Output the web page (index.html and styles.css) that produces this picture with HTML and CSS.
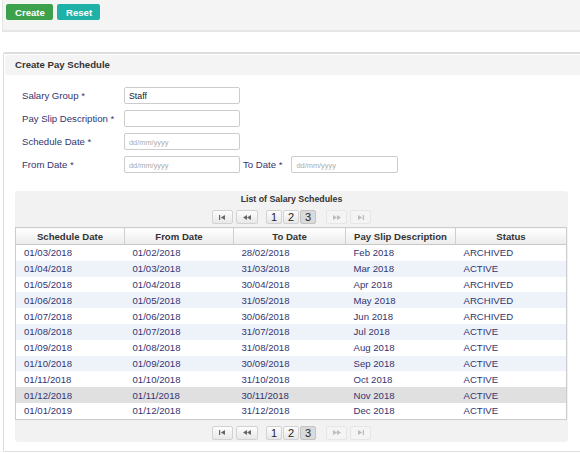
FILE: index.html
```html
<!DOCTYPE html>
<html lang="en">
<head>
    <meta charset="UTF-8">
    <title>Create Pay Schedule</title>
    <link rel="stylesheet" href="styles.css">
</head>
<body>
    <!-- Toolbar -->
    <div class="toolbar">
        <button class="btn btn-create">Create</button>
        <button class="btn btn-reset">Reset</button>
    </div>

    <!-- Pay Schedule Panel -->
    <div class="panel">
        <div class="panel-head">Create Pay Schedule</div>

        <div class="form">
            <div class="form-row">
                <label>Salary Group *</label>
                <input type="text" class="field" value="Staff">
            </div>
            <div class="form-row">
                <label>Pay Slip Description *</label>
                <input type="text" class="field">
            </div>
            <div class="form-row">
                <label>Schedule Date *</label>
                <input type="text" class="field" placeholder="dd/mm/yyyy">
            </div>
            <div class="form-row">
                <label>From Date *</label>
                <input type="text" class="field" placeholder="dd/mm/yyyy">
                <label class="to-label">To Date *</label>
                <input type="text" class="field field-short" placeholder="dd/mm/yyyy">
            </div>
        </div>

        <div class="grid-box">
            <div class="grid-title">List of Salary Schedules</div>
            <div class="pager">
                <span class="pg"><svg width="7" height="5" viewBox="0 0 7 5"><rect x="0" y="0" width="1.2" height="5" fill="#666"/><path d="M6 0 L1.8 2.5 L6 5 Z" fill="#666"/></svg></span>
                <span class="pg pg-wide"><svg width="8" height="5" viewBox="0 0 8 5"><path d="M4 0 L0 2.5 L4 5 Z M8 0 L4 2.5 L8 5 Z" fill="#666"/></svg></span>
                <span class="pg-nums">
                    <span class="pg pg-num">1</span>
                    <span class="pg pg-num">2</span>
                    <span class="pg pg-num pg-on">3</span>
                </span>
                <span class="pg pg-off"><svg width="8" height="5" viewBox="0 0 8 5"><path d="M0 0 L4 2.5 L0 5 Z M4 0 L8 2.5 L4 5 Z" fill="#bbb"/></svg></span>
                <span class="pg pg-off"><svg width="7" height="5" viewBox="0 0 7 5"><path d="M1 0 L5.2 2.5 L1 5 Z" fill="#bbb"/><rect x="5.8" y="0" width="1.2" height="5" fill="#bbb"/></svg></span>
            </div>

            <table class="grid">
                <colgroup>
                    <col style="width:109px">
                    <col style="width:109px">
                    <col style="width:112px">
                    <col style="width:110px">
                    <col>
                </colgroup>
                <thead>
                    <tr>
                        <th>Schedule Date</th>
                        <th>From Date</th>
                        <th>To Date</th>
                        <th>Pay Slip Description</th>
                        <th>Status</th>
                    </tr>
                </thead>
                <tbody>
                    <tr><td>01/03/2018</td><td>01/02/2018</td><td>28/02/2018</td><td>Feb 2018</td><td>ARCHIVED</td></tr>
                    <tr class="alt"><td>01/04/2018</td><td>01/03/2018</td><td>31/03/2018</td><td>Mar 2018</td><td>ACTIVE</td></tr>
                    <tr><td>01/05/2018</td><td>01/04/2018</td><td>30/04/2018</td><td>Apr 2018</td><td>ARCHIVED</td></tr>
                    <tr class="alt"><td>01/06/2018</td><td>01/05/2018</td><td>31/05/2018</td><td>May 2018</td><td>ARCHIVED</td></tr>
                    <tr><td>01/07/2018</td><td>01/06/2018</td><td>30/06/2018</td><td>Jun 2018</td><td>ARCHIVED</td></tr>
                    <tr class="alt"><td>01/08/2018</td><td>01/07/2018</td><td>31/07/2018</td><td>Jul 2018</td><td>ACTIVE</td></tr>
                    <tr><td>01/09/2018</td><td>01/08/2018</td><td>31/08/2018</td><td>Aug 2018</td><td>ACTIVE</td></tr>
                    <tr class="alt"><td>01/10/2018</td><td>01/09/2018</td><td>30/09/2018</td><td>Sep 2018</td><td>ACTIVE</td></tr>
                    <tr><td>01/11/2018</td><td>01/10/2018</td><td>31/10/2018</td><td>Oct 2018</td><td>ACTIVE</td></tr>
                    <tr class="selected"><td>01/12/2018</td><td>01/11/2018</td><td>30/11/2018</td><td>Nov 2018</td><td>ACTIVE</td></tr>
                    <tr><td>01/01/2019</td><td>01/12/2018</td><td>31/12/2018</td><td>Dec 2018</td><td>ACTIVE</td></tr>
                </tbody>
            </table>

            <div class="pager pager-bottom">
                <span class="pg"><svg width="7" height="5" viewBox="0 0 7 5"><rect x="0" y="0" width="1.2" height="5" fill="#666"/><path d="M6 0 L1.8 2.5 L6 5 Z" fill="#666"/></svg></span>
                <span class="pg pg-wide"><svg width="8" height="5" viewBox="0 0 8 5"><path d="M4 0 L0 2.5 L4 5 Z M8 0 L4 2.5 L8 5 Z" fill="#666"/></svg></span>
                <span class="pg-nums">
                    <span class="pg pg-num">1</span>
                    <span class="pg pg-num">2</span>
                    <span class="pg pg-num pg-on">3</span>
                </span>
                <span class="pg pg-off"><svg width="8" height="5" viewBox="0 0 8 5"><path d="M0 0 L4 2.5 L0 5 Z M4 0 L8 2.5 L4 5 Z" fill="#bbb"/></svg></span>
                <span class="pg pg-off"><svg width="7" height="5" viewBox="0 0 7 5"><path d="M1 0 L5.2 2.5 L1 5 Z" fill="#bbb"/><rect x="5.8" y="0" width="1.2" height="5" fill="#bbb"/></svg></span>
            </div>
        </div>
    </div>
</body>
</html>
```

FILE: styles.css
```css
/* Basic Styles */
body {
    margin: 0;
    font-family: "Liberation Sans", Arial, sans-serif;
    font-size: 9.6px;
    color: #333;
    background: #fff;
    width: 600px;
}

/* Toolbar */
.toolbar {
    height: 32px;
    box-sizing: border-box;
    margin-left: 2px;
    padding: 4px 3px;
    background: #f4f4f4;
    border-left: 1px solid #e6e6e6;
    border-bottom: 2px solid #e6e6e6;
    display: flex;
    gap: 4px;
    align-items: flex-start;
}

.btn {
    height: 16px;
    padding: 0 9px;
    border: none;
    border-radius: 2px;
    color: #fff;
    font-family: inherit;
    font-size: 9.6px;
    font-weight: bold;
    cursor: pointer;
}

.btn-create {
    width: 47px;
    background: #3da04a;
}

.btn-reset {
    width: 43px;
    background: #1eb1a8;
}

/* Panel */
.panel {
    margin: 20px 0 0 3px;
    height: 397px;
    border: 1px solid #ddd;
    border-right: none;
    border-top-width: 2px;
    border-radius: 2px 0 0 2px;
}

.panel-head {
    margin: 1px 0 0 1px;
    height: 20px;
    line-height: 20px;
    padding-left: 10px;
    background: #f4f4f4;
    border-radius: 2px 0 0 2px;
    font-weight: bold;
    color: #333;
}

/* Form */
.form {
    padding: 12px 0 0 18px;
    display: flex;
    flex-direction: column;
    gap: 6px;
}

.form-row {
    display: flex;
    align-items: center;
    height: 17px;
}

.form-row label {
    width: 102px;
    color: #343470;
}

.form-row .to-label {
    width: auto;
    margin: 0 9px 0 3px;
}

.field {
    width: 116px;
    height: 17px;
    box-sizing: border-box;
    margin: 0;
    padding: 0 4px;
    border: 1px solid #ccc;
    border-radius: 2px;
    font-family: inherit;
    font-size: 8.8px;
    color: #222;
}

.field::placeholder {
    color: #aaa;
    font-size: 7.4px;
}

.field-short {
    width: 107px;
}

/* Grid box */
.grid-box {
    margin: 18px 0 0 11px;
    width: 553px;
    height: 251px;
    box-sizing: border-box;
    background: #f2f2f2;
    border-radius: 3px;
    padding-top: 2px;
}

.grid-title {
    text-align: center;
    font-size: 8.8px;
    font-weight: bold;
    color: #333;
    height: 12px;
    line-height: 12px;
}

/* Pager */
.pager {
    display: flex;
    justify-content: center;
    align-items: center;
    gap: 3px;
    height: 14px;
    margin: 5px 0 3px;
}

.pager-bottom {
    margin: 6px 0 0;
}

.pg-nums {
    display: flex;
    gap: 1px;
    margin: 0 7px 0 5px;
}

.pg {
    width: 21px;
    height: 14px;
    box-sizing: border-box;
    border: 1px solid #d2d2d2;
    border-radius: 2px;
    background: linear-gradient(#fdfdfd, #e8e8e8);
    display: flex;
    justify-content: center;
    align-items: center;
}

.pg-wide {
    width: 22px;
}

.pg-num {
    width: 16px;
    font-size: 11px;
    color: #222;
}

.pg-on {
    background: #dadada;
    border-color: #c4c4c4;
}

.pg-off {
    border-color: #e6e6e6;
    background: #f4f4f4;
}

/* Table */
.grid {
    width: 552px;
    border-collapse: collapse;
    table-layout: fixed;
    background: #fff;
    border: 1px solid #ccc;
}

.grid th {
    height: 16px;
    padding: 0;
    font-weight: bold;
    color: #333;
    text-align: center;
    background: linear-gradient(#ffffff, #ececec);
    border-right: 1px solid #d0d0d0;
    border-bottom: 1px solid #c8c8c8;
}

.grid td {
    height: 15.8px;
    padding: 0 0 0 8px;
    color: #343470;
    white-space: nowrap;
}

.grid tr.alt td {
    background: #eef3fa;
}

.grid tr.selected td {
    background: #e0e0e0;
}
```
